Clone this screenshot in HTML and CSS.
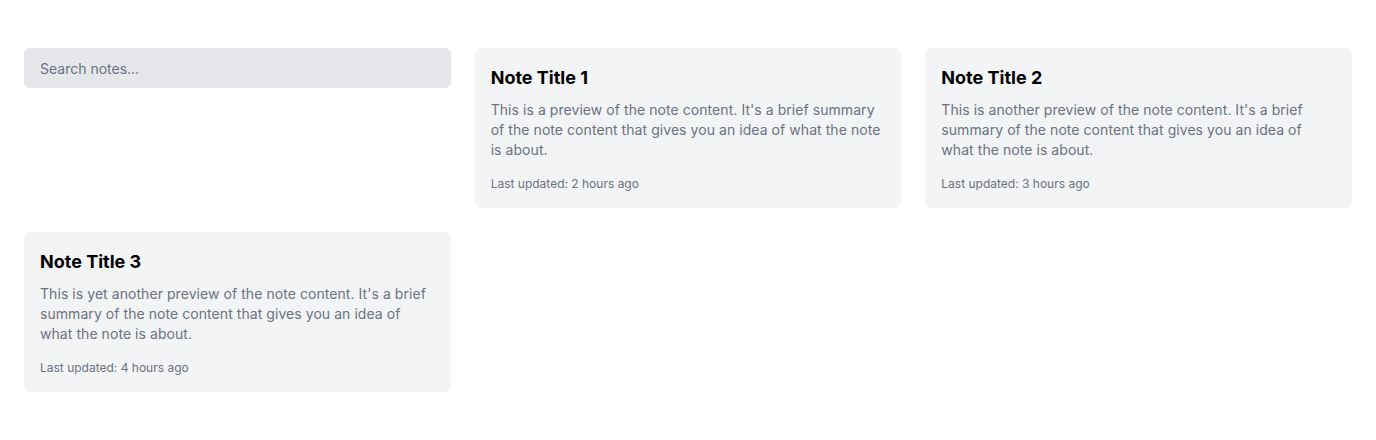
FILE: index.html
```html
<!DOCTYPE html>
<html>
<head>
<meta charset="utf-8">
<link rel="stylesheet" href="styles.css">
</head>
<body>
<main class="grid">
  <div class="search-wrap"><input class="search" type="text" placeholder="Search notes..."></div>
  <article class="card">
    <h2 class="title">Note Title 1</h2>
    <p class="preview">This is a preview of the note content. It's a brief summary of the note content that gives you an idea of what the note is about.</p>
    <p class="meta">Last updated: 2 hours ago</p>
  </article>
  <article class="card">
    <h2 class="title">Note Title 2</h2>
    <p class="preview">This is another preview of the note content. It's a brief summary of the note content that gives you an idea of what the note is about.</p>
    <p class="meta">Last updated: 3 hours ago</p>
  </article>
  <article class="card">
    <h2 class="title">Note Title 3</h2>
    <p class="preview">This is yet another preview of the note content. It's a brief summary of the note content that gives you an idea of what the note is about.</p>
    <p class="meta">Last updated: 4 hours ago</p>
  </article>
</main>
</body>
</html>
```
FILE: styles.css
```css
* { box-sizing: border-box; }
body {
  margin: 0;
  background: #fff;
  font-family: Inter, "Noto Sans", sans-serif;
}
.grid {
  display: grid;
  grid-template-columns: repeat(3, 1fr);
  gap: 24px;
  padding: 48px 24px;
  align-items: start;
}
.search {
  display: block;
  width: 100%;
  height: 40px;
  border: none;
  border-radius: 6px;
  background: #e5e7eb;
  padding: 0 16px;
  font-family: Inter, sans-serif;
  font-size: 14px;
  color: #374151;
  outline: none;
}
.search::placeholder { color: #6b7280; }
.card {
  background: #f3f4f6;
  border-radius: 6px;
  padding: 16px;
}
.title {
  margin: 0 0 8px;
  font-size: 18px;
  line-height: 28px;
  font-weight: 700;
  color: #000;
}
.preview {
  margin: 0 0 16px;
  font-size: 14px;
  line-height: 20px;
  letter-spacing: 0.06px;
  color: #6b7280;
}
.meta {
  margin: 0;
  font-size: 12px;
  line-height: 16px;
  color: #6b7280;
}
```
